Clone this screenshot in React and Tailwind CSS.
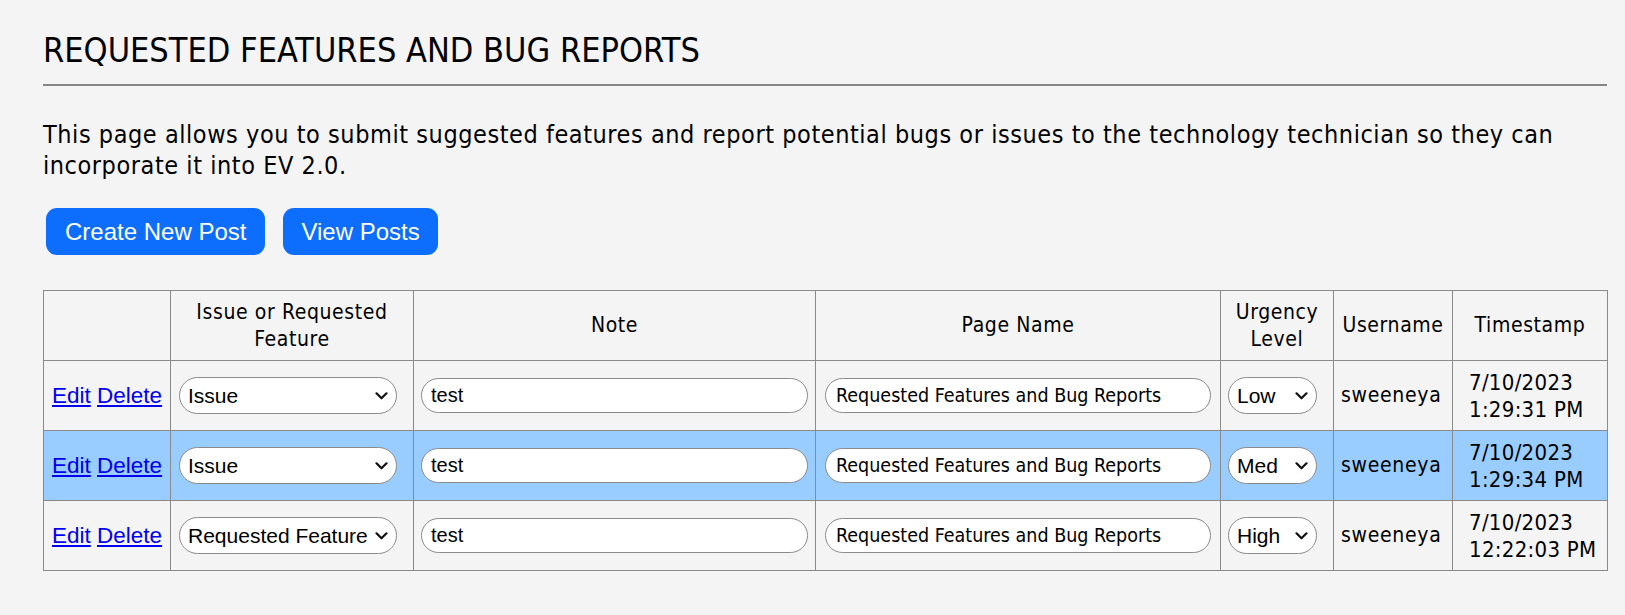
import React from 'react';

const narrow = { fontFamily: '"DejaVu Sans Condensed", "DejaVu Sans", sans-serif' };
const arial = { fontFamily: '"Liberation Sans", Arial, sans-serif' };

const rows = [
  { type: 'Issue', note: 'test', page: 'Requested Features and Bug Reports', urgency: 'Low', user: 'sweeneya', date: '7/10/2023', time: '1:29:31 PM', selected: false },
  { type: 'Issue', note: 'test', page: 'Requested Features and Bug Reports', urgency: 'Med', user: 'sweeneya', date: '7/10/2023', time: '1:29:34 PM', selected: true },
  { type: 'Requested Feature', note: 'test', page: 'Requested Features and Bug Reports', urgency: 'High', user: 'sweeneya', date: '7/10/2023', time: '12:22:03 PM', selected: false },
];

const Chevron = () => (
  <svg className="pointer-events-none absolute right-[9px] top-1/2 -translate-y-1/2" width="13" height="9" viewBox="0 0 13 9" fill="none">
    <path d="M1.5 1.8 L6.5 6.8 L11.5 1.8" stroke="#111" strokeWidth="2.2" strokeLinecap="round" strokeLinejoin="round" />
  </svg>
);

const PillSelect = ({ value, options, width }) => (
  <div className={`relative ${width}`}>
    <select
      defaultValue={value}
      className="w-full h-[37px] appearance-none rounded-full border border-[#8a8a8a] bg-white pl-[8px] pr-6 text-[21px] text-black outline-none"
      style={arial}
    >
      {options.map((o) => (
        <option key={o}>{o}</option>
      ))}
    </select>
    <Chevron />
  </div>
);

const App = () => {
  return (
    <div className="min-h-screen bg-[#f4f4f4] pl-[43px] pr-[18px] pt-[30px] text-black" style={narrow}>
      <h1 className="text-[34px] leading-[40px] font-normal">REQUESTED FEATURES AND BUG REPORTS</h1>
      <hr className="mt-[14px] border-0 border-t-[2px] border-[#858585]" />
      <p className="mt-[33px] text-[25px] leading-[31px] tracking-[0.55px]">
        This page allows you to submit suggested features and report potential bugs or issues to the technology technician so they can incorporate it into EV 2.0.
      </p>

      <div className="mt-[27px] flex gap-[18px] pl-[3px]">
        <button className="h-[47px] rounded-[11px] bg-[#0d6efd] px-[19px] text-[24px] text-white" style={arial}>
          Create New Post
        </button>
        <button className="h-[47px] rounded-[11px] bg-[#0d6efd] px-[18px] text-[24px] text-white" style={arial}>
          View Posts
        </button>
      </div>

      <table className="mt-[35px] w-[1564px] table-fixed border-collapse border border-[#8a8a8a]">
        <colgroup>
          <col className="w-[127px]" />
          <col className="w-[243px]" />
          <col className="w-[402px]" />
          <col className="w-[405px]" />
          <col className="w-[113px]" />
          <col className="w-[119px]" />
          <col className="w-[155px]" />
        </colgroup>
        <thead>
          <tr className="h-[70px] text-[21px] leading-[27px] tracking-[0.6px]">
            <th className="border border-[#8a8a8a] font-normal"></th>
            <th className="border border-[#8a8a8a] px-2 font-normal">Issue or Requested Feature</th>
            <th className="border border-[#8a8a8a] font-normal">Note</th>
            <th className="border border-[#8a8a8a] font-normal">Page Name</th>
            <th className="border border-[#8a8a8a] px-1 font-normal">Urgency Level</th>
            <th className="border border-[#8a8a8a] px-0 font-normal">Username</th>
            <th className="border border-[#8a8a8a] font-normal">Timestamp</th>
          </tr>
        </thead>
        <tbody>
          {rows.map((r, i) => (
            <tr key={i} className={`h-[70px] ${r.selected ? 'bg-[#99ccff]' : ''}`}>
              <td className="border border-[#8a8a8a] pl-[8px]">
                <span className="text-[22.5px] text-[#0000ee]" style={arial}>
                  <a href="#" className="underline">Edit</a>{' '}
                  <a href="#" className="underline">Delete</a>
                </span>
              </td>
              <td className="border border-[#8a8a8a] pl-[8px]">
                <PillSelect value={r.type} options={['Issue', 'Requested Feature']} width="w-[218px]" />
              </td>
              <td className="border border-[#8a8a8a] px-[7px]">
                <input
                  defaultValue={r.note}
                  className="h-[35px] w-[387px] rounded-full border border-[#8a8a8a] bg-white px-[9px] text-[20px] text-black outline-none"
                  style={arial}
                />
              </td>
              <td className="border border-[#8a8a8a] px-[9px]">
                <input
                  defaultValue={r.page}
                  className="h-[35px] w-[386px] rounded-full border border-[#8a8a8a] bg-white px-[10px] text-[19.5px] text-black outline-none"
                  style={narrow}
                />
              </td>
              <td className="border border-[#8a8a8a] pl-[7px]">
                <PillSelect value={r.urgency} options={['Low', 'Med', 'High']} width="w-[89px]" />
              </td>
              <td className="border border-[#8a8a8a] pl-[7px] text-[21px] tracking-[0.7px]">{r.user}</td>
              <td className="border border-[#8a8a8a] pl-[16px] text-[22px] leading-[27px] tracking-[0.3px]">
                {r.date}
                <br />
                {r.time}
              </td>
            </tr>
          ))}
        </tbody>
      </table>
    </div>
  );
};

export default App;
